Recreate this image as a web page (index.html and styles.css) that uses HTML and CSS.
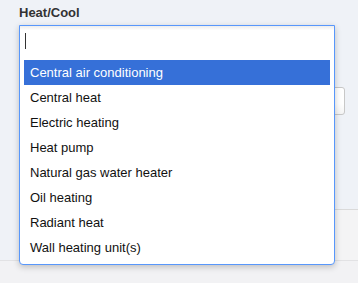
FILE: index.html
```html
<!DOCTYPE html>
<html lang="en">
<head>
  <meta charset="UTF-8" />
  <title>Heat/Cool</title>
  <link rel="stylesheet" href="styles.css">
</head>
<body>

  <div class="form">
    <label class="label">Heat/Cool</label>

    <div class="select-wrap">
      <!-- dropdown aberto por cima dos outros campos -->
      <div class="chosen">
        <div class="choices">
          <span class="caret"></span>
        </div>
        <ul class="results">
          <li class="highlighted">Central air conditioning</li>
          <li>Central heat</li>
          <li>Electric heating</li>
          <li>Heat pump</li>
          <li>Natural gas water heater</li>
          <li>Oil heating</li>
          <li>Radiant heat</li>
          <li>Wall heating unit(s)</li>
        </ul>
      </div>
    </div>

    <div class="field">
      <input type="text" class="input">
    </div>
  </div>

  <div class="panel"></div>
  <div class="footer"></div>

</body>
</html>
```

FILE: styles.css
```css
* {
  margin: 0;
  padding: 0;
  box-sizing: border-box;
  font-family: 'Liberation Sans', Arial, sans-serif;
}

body {
  background: #eff2f7;
  overflow: hidden;
  height: 283px;
}

.form {
  padding: 4px 13px 0 19px;
}

.label {
  display: block;
  font-size: 13px;
  font-weight: bold;
  line-height: 17px;
  color: #333;
  margin-bottom: 4px;
}

.select-wrap {
  position: relative;
  height: 31px;
}

.chosen {
  position: absolute;
  top: 0;
  left: 0;
  width: 316px;
  z-index: 10;
  border: 1px solid #5897fb;
  border-radius: 0 0 4px 4px;
  background: #fff;
  box-shadow: 0 2px 6px rgba(0, 0, 0, 0.22);
}

.choices {
  height: 30px;
  padding: 7px 5px 0;
  background: linear-gradient(#eee 1%, #fff 15%);
}

.caret {
  display: block;
  width: 1px;
  height: 16px;
  background: #333;
}

.results {
  list-style: none;
  margin: 4px 4px 4px 0;
  padding-left: 4px;
}

.results li {
  padding: 5px 6px;
  line-height: 15px;
  font-size: 13px;
  color: #111;
}

.results li.highlighted {
  background: #3670d8;
  color: #fff;
}

.field {
  margin-top: 31px;
}

.input {
  display: block;
  width: 326px;
  height: 28px;
  border: 1px solid #c8c8c8;
  border-radius: 3px;
  background: linear-gradient(#fff 60%, #f4f4f4);
}

.panel {
  margin: 94px 0 0 200px;
  height: 51px;
  background: #f4f4f5;
  border-top: 1px solid #dadada;
}

.footer {
  height: 30px;
  background: #f2f2f4;
  border-top: 1px solid #e2e2e4;
}
```
